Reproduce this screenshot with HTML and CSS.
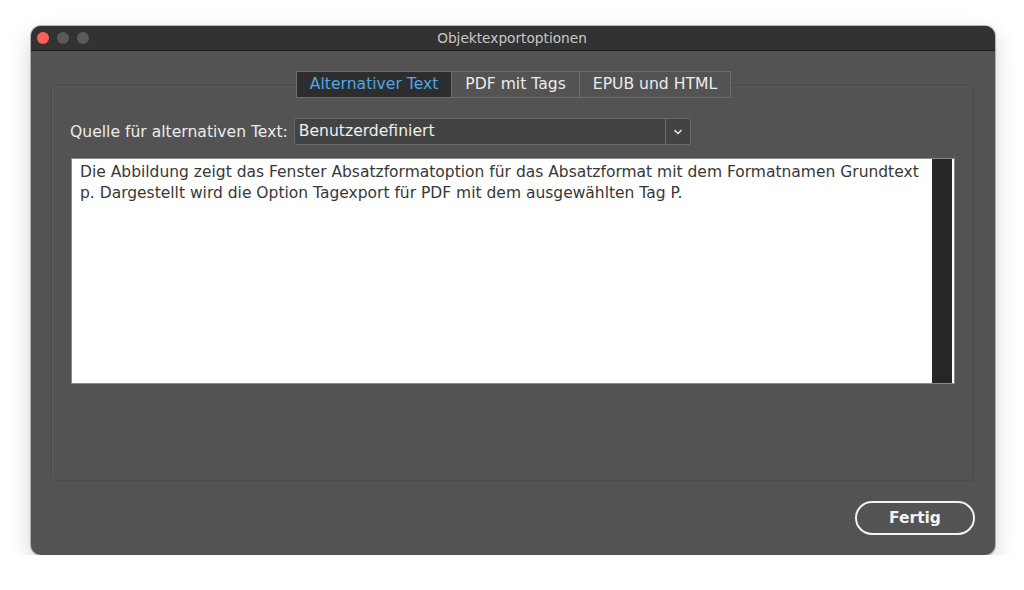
FILE: index.html
```html
<!DOCTYPE html>
<html lang="de">
<head>
    <meta charset="UTF-8">
    <title>Objektexportoptionen</title>
    <link rel="stylesheet" href="styles.css">
</head>
<body>
    <div class="window">
        <div class="titlebar">
            <div class="lights">
                <span class="light red"></span>
                <span class="light"></span>
                <span class="light"></span>
            </div>
            <div class="title">Objektexportoptionen</div>
        </div>

        <div class="content">
            <div class="tabs">
                <div class="tab active">Alternativer Text</div>
                <div class="tab">PDF mit Tags</div>
                <div class="tab">EPUB und HTML</div>
            </div>

            <div class="group">
                <div class="source-row">
                    <span class="label">Quelle für alternativen Text:</span>
                    <div class="select">
                        <span class="select-value">Benutzerdefiniert</span>
                        <span class="select-arrow">
                            <svg width="10" height="6" viewBox="0 0 10 6">
                                <path d="M1.5 1.2 L5 4.5 L8.5 1.2" fill="none" stroke="#e0e0e0" stroke-width="1.6"/>
                            </svg>
                        </span>
                    </div>
                </div>

                <div class="textbox">
                    <div class="text">Die Abbildung zeigt das Fenster Absatzformatoption für das Absatzformat mit dem Formatnamen Grundtext p. Dargestellt wird die Option Tagexport für PDF mit dem ausgewählten Tag P.</div>
                    <div class="scrollbar"></div>
                </div>
            </div>

            <div class="footer">
                <button class="btn-done">Fertig</button>
            </div>
        </div>
    </div>
</body>
</html>
```

FILE: styles.css
```css
* {
    box-sizing: border-box;
    margin: 0;
    padding: 0;
}

body {
    background-color: #ffffff;
    font-family: 'DejaVu Sans', 'Liberation Sans', sans-serif;
    padding: 26px 0 0 31px;
}

.window {
    width: 964px;
    height: 529px;
    background-color: #535353;
    border-radius: 10px;
    overflow: hidden;
    box-shadow: 0 8px 22px rgba(0,0,0,0.18), 0 0 0 1px rgba(0,0,0,0.25);
    display: flex;
    flex-direction: column;
}

/* Titelleiste */
.titlebar {
    height: 25px;
    background-color: #323232;
    border-bottom: 1px solid #1e1e1e;
    display: flex;
    align-items: center;
}
.lights {
    display: flex;
    gap: 8px;
    padding-left: 6px;
}
.light {
    width: 12px;
    height: 12px;
    border-radius: 50%;
    background-color: #5a5a5a;
}
.light.red {
    background-color: #fe5f57;
}
.title {
    flex: 1;
    text-align: center;
    color: #c8c8c8;
    font-size: 13.7px;
    margin-right: 60px;
}

.content {
    flex: 1;
    display: flex;
    flex-direction: column;
    padding: 20px 21px 20px 20px;
}

/* Reiter */
.tabs {
    display: flex;
    align-self: center;
    margin-left: 2px;
    border: 1px solid #6e6e6e;
    position: relative;
    z-index: 1;
}
.tab {
    height: 25px;
    line-height: 24px;
    padding: 0 13px;
    font-size: 15.6px;
    color: #ececec;
    background-color: #535353;
    border-left: 1px solid #6e6e6e;
}
.tab:first-child {
    border-left: none;
}
.tab.active {
    background-color: #2d2d2d;
    color: #4fa7e6;
}

.group {
    height: 396px;
    margin-top: -13px;
    border: 1px solid #4a4a4a;
    box-shadow: inset 1px 1px 0 #5b5b5b;
    border-radius: 3px;
    padding: 32px 19px 0 19px;
}

.source-row {
    display: flex;
    align-items: center;
    gap: 6px;
}
.label {
    color: #ececec;
    font-size: 15.6px;
    margin-left: -1px;
}
.select {
    width: 397px;
    height: 27px;
    display: flex;
    border: 1px solid #6a6a6a;
    border-radius: 2px;
    background-color: #434343;
}
.select-value {
    flex: 1;
    color: #f0f0f0;
    font-size: 15.6px;
    line-height: 25px;
    padding-left: 4px;
}
.select-arrow {
    width: 25px;
    border-left: 1px solid #6a6a6a;
    display: flex;
    align-items: center;
    justify-content: center;
}

.textbox {
    margin-top: 13px;
    width: 884px;
    height: 226px;
    background-color: #ffffff;
    border: 1px solid #8a8a8a;
    display: flex;
}
.text {
    flex: 1;
    color: #383838;
    font-size: 15.5px;
    line-height: 21px;
    padding: 3px 6px 0 8px;
}
.scrollbar {
    width: 20px;
    background-color: #262626;
    margin-right: 2px;
}

.footer {
    flex: 1;
    display: flex;
    justify-content: flex-end;
    align-items: flex-end;
}
.btn-done {
    width: 120px;
    height: 34px;
    border: 2px solid #f2f2f2;
    border-radius: 17px;
    background-color: #535353;
    color: #f2f2f2;
    font-family: inherit;
    font-size: 15.5px;
    font-weight: bold;
    margin-right: -1px;
}
```
